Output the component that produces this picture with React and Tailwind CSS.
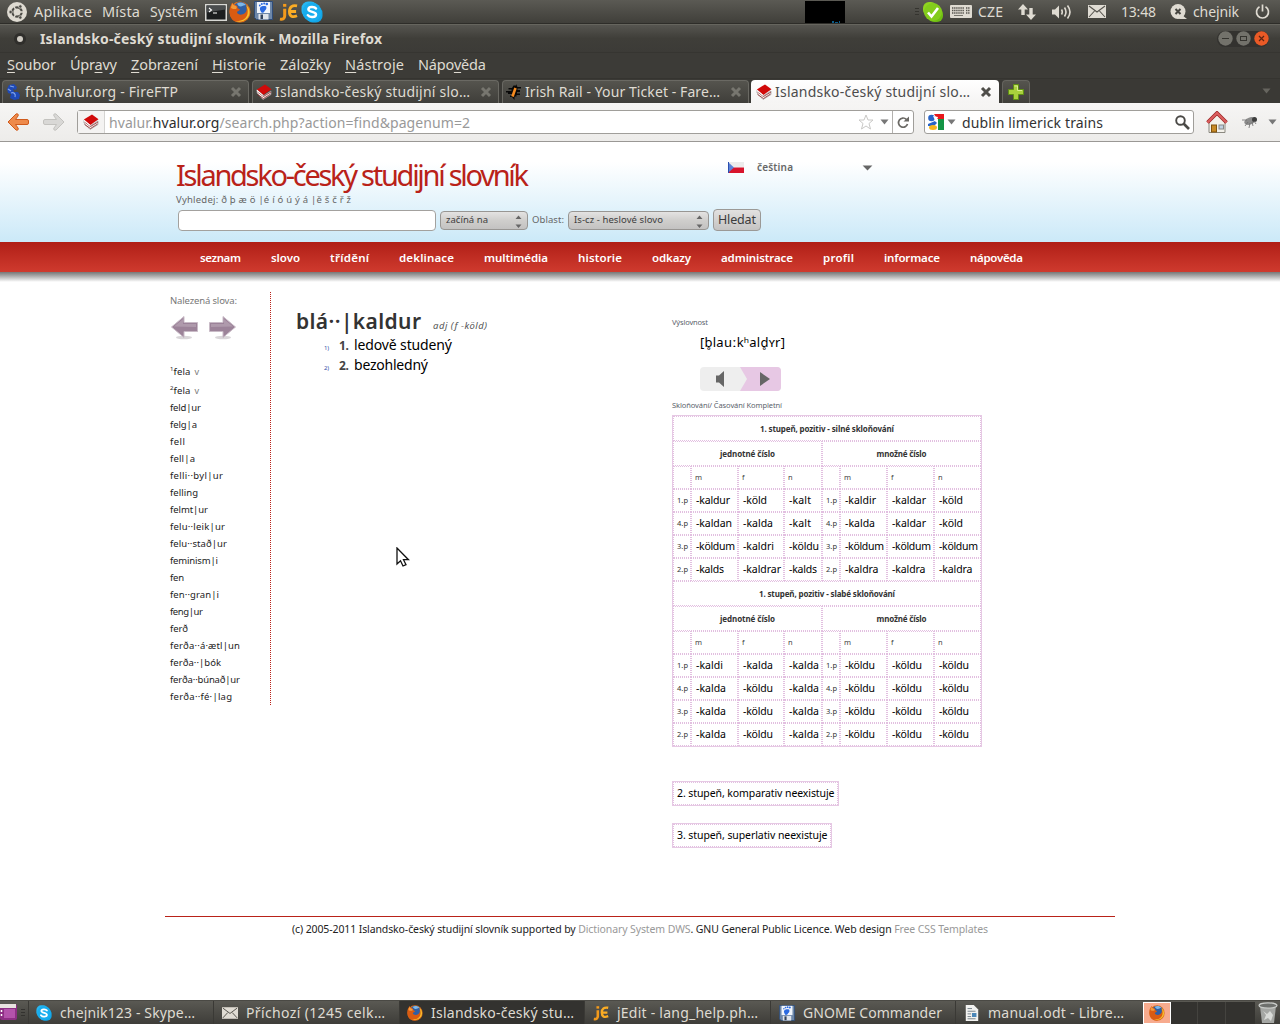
import React, { useLayoutEffect, useRef } from "react";

/* Text set to a fixed measure: tracking is computed from the natural width. */
function Fit({ w, className = "", children }) {
  const ref = useRef(null);
  useLayoutEffect(() => {
    const el = ref.current;
    el.style.letterSpacing = "0px";
    const natural = el.getBoundingClientRect().width;
    const count = el.textContent.replace(/[\u0300-\u036f]/g, "").length;
    if (count > 1) el.style.letterSpacing = (w - natural) / (count - 1) + "px";
  }, [w]);
  return (
    <span className={"block shrink-0 whitespace-pre " + className} style={{ width: w }}>
      <span ref={ref} className="inline-block [font-variant-ligatures:none]">{children}</span>
    </span>
  );
}

const Firefox = ({ className }) => (
  <svg viewBox="0 0 22 22" className={className}>
    <circle cx="11" cy="11" r="10.500" fill="#e2711a" />
    <circle cx="11.500" cy="8.500" r="7.500" fill="#2f5fa5" />
    <path d="M8 2.500c3-1.800 7-1 9 1.500-2 0-3 1-5 1.500-1.500.5-3-1-4-3z" fill="#7db7e8" />
    <path d="M1 6C2 4 3 3 3 1.500c1 1 1.500 2 3 2.500 2 .5 3 1 2.500 3L11 8.500c-.5 1.500-3 1.500-3 3 1 2.500 5 3 8 .5 2-2 2-4 1-7 4 3 5 8 2 12-3 4-9 5.500-14 3C.5 17 0 11 1 6z" fill="#d95b12" />
    <path d="M17 4c4 3 5 9 1.500 13-3 3.500-8 4.500-12 3 6 .5 11-2 12-7 .6-3.500 0-6-1.500-9z" fill="#f7c22d" />
    <path d="M2 7c0-2 1-3 1-5 1 2 2 2.500 4 3 1 1 1 2 0 3-2 0-4 0-5-1z" fill="#f29a3a" />
  </svg>
);

const Skype = ({ className }) => (
  <svg viewBox="0 0 22 22" className={className}>
    <rect x="0.500" y="0.500" width="16" height="16" rx="6.500" fill="#29b6f0" />
    <rect x="5" y="5.500" width="16.500" height="16" rx="6.500" fill="#12a5e6" />
    <circle cx="11" cy="11" r="9.500" fill="#18adee" />
    <path d="M15 7.500C13.500 5.300 7.400 5.200 7.400 8.300c0 3.200 7.600 2 7.600 5.200 0 3.200-6.500 3.400-8.200.7" fill="none" stroke="#fff" strokeWidth="2.500" strokeLinecap="round" />
  </svg>
);

const Commander = ({ className }) => (
  <svg viewBox="0 0 19 19" className={className}>
    <path d="M0.500 0.500h18v18h-16l-2-2z" fill="#6d87a8" stroke="#2f4c78" />
    <rect x="3" y="1" width="13" height="11" fill="#f1f5fb" />
    <rect x="4.500" y="13" width="10" height="5.500" fill="#dfe4ea" />
    <rect x="6.500" y="13.500" width="2.500" height="4.500" fill="#33435c" />
    <path d="M7.500 11.500c-1-1.500-2.300-3.500-1.300-5 1.300-1.300 4-1.800 6-1 .8 2-.4 3.500-1.400 4.200-.5 1.500-2 2.600-3.300 1.800z" fill="#2b6ae0" />
    <circle cx="5.800" cy="4.500" r="0.900" fill="#2b6ae0" /><circle cx="7.800" cy="3" r="1" fill="#2b6ae0" /><circle cx="10.200" cy="2.600" r="1" fill="#2b6ae0" /><circle cx="12.800" cy="3" r="1.300" fill="#2b6ae0" />
  </svg>
);

const JEdit = ({ className }) => (
  <svg viewBox="0 0 20 20" className={className}>
    <path d="M6 6.500v7.500c0 3-2 4-5 3.500" fill="none" stroke="#f39a1c" strokeWidth="3.200" />
    <rect x="4.300" y="1.500" width="3.400" height="3" fill="#f39a1c" />
    <path d="M19 3.500c-5-1-8 1-8 6s3 6.500 8 4.500M10 9.500h8" fill="none" stroke="#fbac24" strokeWidth="3" />
  </svg>
);

const Book = ({ className }) => (
  <svg viewBox="0 0 16 16" className={className}>
    <path d="M1 9l6 6.500 8-5V7L7 12 1 6z" fill="#f4f4f4" stroke="#999" strokeWidth="0.700" />
    <path d="M1.500 10.500l6 4 7-4.500M1.500 8l6 4.500L15 8" fill="none" stroke="#8a1414" strokeWidth="0.700" />
    <path d="M0.800 5.500L9 0.500l6.500 4.800L7.300 11z" fill="#d10a0a" />
    <path d="M0.800 5.500l6.500 5.500v1.200L0.800 7z" fill="#fff" />
  </svg>
);

const Envelope = ({ className }) => (
  <svg viewBox="0 0 18 13" className={className}>
    <rect width="18" height="13" fill="#e0dcd4" />
    <path d="M1 1l8 6 8-6M1 12l5.500-6M17 12l-5.500-6" fill="none" stroke="#55534d" strokeWidth="1.100" />
  </svg>
);

const Caret = ({ className = "", color = "#777", size = "h-[6px] w-[9px]" }) => (
  <svg viewBox="0 0 9 6" preserveAspectRatio="none" className={"shrink-0 " + size + " " + className}>
    <path d="M0.500 0.500h8L4.500 5.500z" fill={color} />
  </svg>
);

const TabClose = ({ color }) => (
  <svg viewBox="0 0 12 12" className="h-3 w-3 shrink-0">
    <path d="M2 2l8 8M10 2l-8 8" stroke={color} strokeWidth="3" />
  </svg>
);

function TopPanel() {
  return (
    <div className="flex h-6 items-center border-b border-[#2e2d29] bg-gradient-to-b from-[#5b5a54] to-[#403f3a] text-[14px] text-[#dfdbd2]">
      <svg viewBox="0 0 20 20" className="ml-[7px] h-5 w-5">
        <circle cx="10" cy="10" r="10" fill="#dfdbd2" />
        <circle cx="10" cy="10" r="4.700" fill="none" stroke="#4c4b46" strokeWidth="2.200" />
        <path d="M10 10L18 10M10 10L6 3M10 10L6 17" stroke="#dfdbd2" strokeWidth="1.400" />
        <circle cx="3.600" cy="10" r="1.700" fill="#4c4b46" stroke="#dfdbd2" strokeWidth="0.700" />
        <circle cx="13.300" cy="4.500" r="1.700" fill="#4c4b46" stroke="#dfdbd2" strokeWidth="0.700" />
        <circle cx="13.300" cy="15.500" r="1.700" fill="#4c4b46" stroke="#dfdbd2" strokeWidth="0.700" />
      </svg>
      <Fit w={58} className="ml-[7px] text-[14.500px]">Aplikace</Fit>
      <Fit w={38} className="ml-[10px] text-[14.500px]">Místa</Fit>
      <Fit w={48} className="ml-[10px]">Systém</Fit>
      <svg viewBox="0 0 22 17" className="ml-[7px] mt-[2px] h-[17px] w-[22px]">
        <rect width="22" height="17" fill="#d8d8d4" />
        <rect x="1.500" y="1.500" width="19" height="14" fill="#1b1e1f" />
        <path d="M1.500 8.500V1.500h19v4z" fill="#4a4d4e" />
        <path d="M4 4l2.500 2L4 8M8 9h4" fill="none" stroke="#fff" strokeWidth="1.100" />
      </svg>
      <Firefox className="ml-[2px] h-[22px] w-[22px]" />
      <Commander className="ml-[3px] -mt-[2px] h-[19px] w-[19px]" />
      <JEdit className="ml-[6px] h-[20px] w-[19px]" />
      <Skype className="ml-[3px] h-[22px] w-[22px]" />
      <div className="ml-[482px] flex h-[22px] w-[40px] items-end justify-end gap-px bg-black pr-[5px]">
        <span className="h-[2px] w-[2px] bg-[#0a5a86]" /><span className="h-px w-[3px] bg-[#0a5a86]" /><span className="h-[2px] w-px bg-[#0a5a86]" />
      </div>
      <div className="ml-[70px] flex flex-col gap-[2px]"><i className="h-px w-[4px] bg-[#35342f]" /><i className="h-px w-[4px] bg-[#35342f]" /><i className="h-px w-[4px] bg-[#35342f]" /></div>
      <svg viewBox="0 0 20 20" className="ml-[4px] h-5 w-5">
        <rect x="0" y="0" width="14" height="14" rx="6" fill="#8fd420" />
        <rect x="5" y="6" width="15" height="14" rx="6" fill="#6fbe12" />
        <circle cx="10" cy="10" r="9" fill="#83cc1c" />
        <path d="M5 10.500l3.500 4L15 6" fill="none" stroke="#fff" strokeWidth="2.600" />
      </svg>
      <svg viewBox="0 0 22 13" className="ml-[7px] h-[13px] w-[22px]">
        <rect width="22" height="13" rx="1" fill="#dfdbd2" />
        <path d="M2 3h12M2 5.500h12M2 8h12M16 3h4M16 5.500h4M16 8h4" stroke="#55534d" strokeWidth="1.300" strokeDasharray="1.400 0.700" />
        <path d="M4 10.500h9" stroke="#77756d" />
      </svg>
      <Fit w={25} className="ml-[6px]">CZE</Fit>
      <svg viewBox="0 0 18 16" className="ml-[15px] h-4 w-[18px]">
        <path d="M5 0l5 5.500H6.700V11H3.300V5.500H0zM13 16l-5-5.500h3.300V4h3.400v6.500H18z" fill="#dfdbd2" />
      </svg>
      <svg viewBox="0 0 20 16" className="ml-[16px] h-4 w-5">
        <path d="M0 5.500h3L7 1.500v13l-4-4H0z" fill="#dfdbd2" />
        <path d="M9.500 5.500q1.500 2.500 0 5M12.500 3.500q3 4.500 0 9M15.500 1.500q5 6.500 0 13" fill="none" stroke="#dfdbd2" strokeWidth="1.600" />
      </svg>
      <Envelope className="ml-[16px] h-[13px] w-[18px]" />
      <Fit w={35} className="ml-[15px]">13:48</Fit>
      <svg viewBox="0 0 17 16" className="ml-[14px] h-4 w-[17px]">
        <circle cx="8" cy="7.500" r="7.500" fill="#dfdbd2" />
        <path d="M12 11l5 4H9z" fill="#dfdbd2" />
        <path d="M5.500 5l5 5M10.500 5l-5 5" stroke="#45443f" strokeWidth="2" />
      </svg>
      <Fit w={46} className="ml-[6px]">chejnik</Fit>
      <svg viewBox="0 0 15 15" className="ml-[16px] h-[15px] w-[15px]">
        <path d="M4.500 2.800a6 6 0 1 0 6 0M7.500 0.500v7" fill="none" stroke="#dfdbd2" strokeWidth="1.700" />
      </svg>
    </div>
  );
}

function TitleBar() {
  return (
    <div className="flex h-7 items-center border-t border-[#66655e] bg-gradient-to-b from-[#565550] via-[#3f3e39] to-[#3c3b37] text-[#dfdbd2]">
      <div className="ml-[14px] flex h-3 w-3 items-center justify-center rounded-full bg-[#2f2e2b]">
        <span className="h-[6px] w-[6px] rounded-full bg-[#cfcbc3]" />
      </div>
      <Fit w={342} className="ml-[14px] text-[14px] font-bold">Islandsko-český studijní slovník - Mozilla Firefox</Fit>
      <div className="ml-[835px] flex h-4 items-center gap-[3px] rounded-full bg-[#33322f] pl-px">
        <svg viewBox="0 0 15 15" className="h-[15px] w-[15px]"><circle cx="7.500" cy="7.500" r="7.200" fill="#73726b" /><path d="M4 7.500h7" stroke="#35342f" /></svg>
        <svg viewBox="0 0 15 15" className="h-[15px] w-[15px]"><circle cx="7.500" cy="7.500" r="7.200" fill="#73726b" /><rect x="4.500" y="5.500" width="6" height="4" fill="none" stroke="#35342f" /></svg>
        <svg viewBox="0 0 15 15" className="h-[15px] w-[15px]"><circle cx="7.500" cy="7.500" r="7.200" fill="#ea5a26" /><path d="M5 5l5 5M10 5l-5 5" stroke="#5c2412" strokeWidth="1.200" /></svg>
      </div>
    </div>
  );
}

const MENU = [
  ["", "S", "oubor", 49], ["Úpr", "a", "vy", 47], ["", "Z", "obrazení", 67], ["", "H", "istorie", 54],
  ["Zál", "o", "žky", 51], ["", "N", "ástroje", 59], ["Nápo", "v", "ěda", 68],
];

function MenuBar() {
  return (
    <div className="flex h-[26px] items-center gap-[14px] border-t border-[#363531] bg-[#3c3b37] pb-px pl-[7px] text-[14.500px] text-[#dfdbd2]">
      {MENU.map(([a, key, b, w]) => (
        <Fit key={a + key + b} w={w}>{a}<span className="underline decoration-1 underline-offset-2">{key}</span>{b}</Fit>
      ))}
    </div>
  );
}

const RailIcon = ({ className }) => (
  <svg viewBox="0 0 16 16" className={className}>
    <path d="M7.500 1.500h2.500V0l1.500 3H15v1.500h-3.500V6H14v2h-3v1.500h3V11h-3.500v1.500H8.500V16L6 13H4v-1.500h2.500V10H2V8.500H0V7h5.500V5.500H2.500V4H6z" fill="#080808" />
    <path d="M9.500 4L6.500 12.500" stroke="#f58a1f" strokeWidth="2.600" />
  </svg>
);
const Horse = ({ className }) => (
  <svg viewBox="0 0 16 16" className={className}>
    <path d="M3 1l5-1 3 3-1 3-3-1 1 3 4 0 2 3-1 4-5 1-4-2 1-4-3-1-1-4z" fill="#1f49b4" />
    <path d="M4 2l4 1M5 9c3-1 5 1 4 4M2 5l3 2" fill="none" stroke="#7ea2ea" strokeWidth="1.200" />
  </svg>
);

const TABS = [
  [Horse, "ftp.hvalur.org - FireFTP", 153],
  [Book, "Islandsko-český studijní slo…", 195],
  [RailIcon, "Irish Rail - Your Ticket - Fare…", 195],
];

function TabBar() {
  return (
    <div className="flex h-[25px] items-end border-t border-[#353430] bg-[#3a3935] pl-[2px] text-[14px]">
      {TABS.map(([Icon, label, w], i) => (
        <div key={i} className="mr-[3px] flex h-[23px] w-[247px] items-center rounded-t-[4px] border border-b-0 border-[#6a6963] bg-gradient-to-b from-[#55544e] via-[#4a4944] to-[#3f3e3a] pb-px pl-[3px] pr-[6px] text-[#dfdbd2]">
          <Icon className="mr-[3px] h-4 w-4" />
          <Fit w={w} className="mr-auto leading-[19px]">{label}</Fit>
          <TabClose color="#77766f" />
        </div>
      ))}
      <div className="-ml-px flex h-[23px] w-[248px] items-center rounded-t-[4px] bg-gradient-to-b from-white to-[#f5f4f3] pl-[5px] pr-[7px] text-[#4c4c4c]">
        <Book className="mr-[3px] h-4 w-4" />
        <Fit w={195} className="mr-auto leading-[19px]">Islandsko-český studijní slo…</Fit>
        <TabClose color="#4f4e4a" />
      </div>
      <div className="ml-[3px] flex h-[23px] w-[28px] items-center justify-center rounded-t-[4px] border border-b-0 border-[#66655f] bg-gradient-to-b from-[#55544e] to-[#403f3a]">
        <svg viewBox="0 0 16 16" className="h-4 w-4"><path d="M5.500 .5h5v5h5v5h-5v5h-5v-5h-5v-5h5z" fill="#a9d13c" stroke="#5f8f14" /><path d="M6.500 2h3v4.500h4.500" fill="none" stroke="#d9ee8e" /></svg>
      </div>
      <Caret className="mb-[9px] ml-[232px]" color="#66655f" />
    </div>
  );
}

const FatArrow = ({ fill, stroke, flip }) => (
  <svg viewBox="0 0 22 18" className={"h-[18px] w-[22px] shrink-0 " + (flip ? "-scale-x-100" : "")}>
    <path d="M1 9l8-8c1.500-.8 3 .5 2 2L8.500 6.500H20a1.500 1.500 0 0 1 1.500 1.500v2a1.500 1.500 0 0 1-1.500 1.500H8.500L11 15c1 1.500-.5 2.800-2 2z" fill={fill} stroke={stroke} />
  </svg>
);

function Toolbar() {
  return (
    <div className="flex h-[39px] items-center border-b border-[#9a9895] bg-gradient-to-b from-[#f6f5f4] to-[#edecea]">
      <div className="ml-[7px]"><FatArrow fill="#ee8a4b" stroke="#cf5a1c" /></div>
      <div className="ml-[14px]"><FatArrow fill="#d9d8d6" stroke="#c3c2bf" flip /></div>
      <div className="ml-[12px] flex h-6 w-[837px] items-center rounded-[3px] border border-[#a09e9a] bg-white">
        <div className="flex h-full w-[27px] items-center justify-center border-r border-[#d5d4d2] bg-[#f4f3f2]"><Book className="h-4 w-4" /></div>
        <Fit w={361} className="ml-[4px] text-[14px] text-[#999]">hvalur.<span className="text-[#2d2d2d]">hvalur.org</span>/search.php?action=find&amp;pagenum=2</Fit>
        <svg viewBox="0 0 16 16" className="ml-auto h-4 w-4"><path d="M8 1l2 5h5l-4 3.500 1.500 5.500L8 12l-4.500 3L5 9.500 1 6h5z" fill="#fff" stroke="#c9c8c6" /></svg>
        <Caret className="ml-[6px] mr-[3px]" />
        <div className="flex h-full w-[21px] items-center justify-center border-l border-[#b3b1ae]">
          <svg viewBox="0 0 13 13" className="h-[13px] w-[13px]"><path d="M10.500 8A4.600 4.600 0 1 1 9.300 3.300" fill="none" stroke="#6a6864" strokeWidth="1.700" /><path d="M6.500 5.500h5.500V0.500z" fill="#6a6864" /></svg>
        </div>
      </div>
      <div className="ml-[10px] flex h-6 w-[270px] items-center rounded-[3px] border border-[#a09e9a] bg-white pl-[3px] pr-[3px]">
        <svg viewBox="0 0 16 16" className="h-4 w-4">
          <rect width="16" height="16" fill="#fff" /><path d="M6 0h10v5L9 5z" fill="#e8171b" /><path d="M10 5h6v11h-6z" fill="#149445" />
          <circle cx="3.500" cy="4" r="3.300" fill="#2764c8" /><path d="M0 10l7-3 2 2-3 3H0z" fill="#2764c8" /><ellipse cx="5" cy="13.500" rx="4" ry="2.500" fill="#f5b51c" /><path d="M5 2l3 6 2-5z" fill="#fff" />
        </svg>
        <Caret className="ml-[3px]" />
        <Fit w={141} className="ml-[6px] text-[14px] text-[#333]">dublin limerick trains</Fit>
        <svg viewBox="0 0 15 15" className="ml-auto h-[15px] w-[15px]"><circle cx="5.500" cy="5.500" r="4.300" fill="none" stroke="#4a4946" strokeWidth="1.900" /><path d="M8.500 8.500L14 14" stroke="#4a4946" strokeWidth="2.600" /></svg>
      </div>
      <svg viewBox="0 0 22 22" className="ml-[12px] h-[22px] w-[22px]">
        <path d="M3 11L11 3l8 8v10.500H3z" fill="#f3f1ea" stroke="#8a8880" />
        <path d="M1.500 11.500L11 2l9.500 9.500" fill="none" stroke="#9c2626" strokeWidth="3.600" />
        <path d="M1.500 11.500L11 2l9.500 9.500" fill="none" stroke="#dc5f5f" strokeWidth="2.200" />
        <rect x="5.500" y="14" width="5" height="7" fill="#c88a25" stroke="#80530f" /><rect x="13" y="14" width="4.500" height="4" fill="#bfd0e0" stroke="#888" />
      </svg>
      <svg viewBox="0 0 16 14" className="ml-[14px] h-[14px] w-4">
        <ellipse cx="8" cy="6" rx="6" ry="3.500" fill="#8b8b8b" transform="rotate(-20 8 6)" /><circle cx="12.500" cy="4.500" r="2.500" fill="#3d3d3d" />
        <path d="M0 5h5M3 11l3-4M7 13l1-5M11 11l-1-4M14 9l-2-3" stroke="#6c6c6c" strokeWidth="0.800" />
      </svg>
      <Caret className="ml-[10px]" />
    </div>
  );
}

const SelectBox = ({ className, label, w }) => (
  <div className={"flex h-[19px] items-center rounded-[4px] border border-[#989693] bg-gradient-to-b from-[#e4e3e2] via-[#cfcecc] to-[#c3c2c1] pl-[5px] pr-[5px] text-[9.500px] text-[#3c3c3c] " + className}>
    <Fit w={w} className="mr-auto mt-px">{label}</Fit>
    <svg viewBox="0 0 7 13" className="mt-[2px] h-[13px] w-[7px]"><path d="M0.500 4h6L3.500 0.500zM0.500 9.500h6l-3 3.500z" fill="#666" /></svg>
  </div>
);

function PageHeader() {
  return (
    <header className="flex h-[100px] bg-gradient-to-b from-white from-20% to-[#cbe9f8]">
      <div className="flex w-[728px] shrink-0 flex-col pl-[176px]">
        <h1 className="mt-[17px] h-[35px] text-[29px] leading-[32px] text-[#b92219]"><Fit w={353}>Islandsko-český studijní slovník</Fit></h1>
        <div className="h-[14px] text-[9.500px] leading-[12px] text-[#666]"><Fit w={175}>Vyhledej: ð þ æ ö |é í ó ú ý á |ě š č ř ž</Fit></div>
        <div className="flex h-6 w-[600px] items-center pl-[2px]">
          <div className="h-[21px] w-[258px] shrink-0 rounded-[4px] border border-[#a3a19e] bg-white" />
          <SelectBox className="ml-[4px] w-[88px] shrink-0" label="začíná na" w={42} />
          <Fit w={32} className="ml-[4px] mt-px text-[9.500px] text-[#666]">Oblast:</Fit>
          <SelectBox className="ml-[4px] w-[141px] shrink-0" label="Is-cz - heslové slovo" w={89} />
          <div className="ml-[4px] flex h-[22px] w-[48px] shrink-0 items-center justify-center rounded-[4px] border border-[#9b9996] bg-gradient-to-b from-[#e2e1e0] to-[#c4c3c2] text-[12.500px] text-[#3c3c3c]"><Fit w={38} className="mt-px">Hledat</Fit></div>
        </div>
      </div>
      <div className="mt-[17px] flex h-4 items-center">
        <svg viewBox="0 0 16 11" className="mt-px h-[11px] w-4"><rect width="16" height="5.500" fill="#ececec" /><rect y="5.500" width="16" height="5.500" fill="#d8142c" /><path d="M0 0l6 5.500L0 11z" fill="#5c83d8" /><path d="M0.500 0v11" stroke="#2b4fb0" /></svg>
        <Fit w={36} className="ml-[13px] text-[10px] font-semibold text-[#666]">čeština</Fit>
        <Caret className="ml-[69px] mt-px" size="h-[6px] w-[11px]" color="#666" />
      </div>
    </header>
  );
}

const NAV = [["seznam", 41], ["slovo", 29], ["třídění", 39], ["deklinace", 55], ["multimédia", 64], ["historie", 44], ["odkazy", 39], ["administrace", 72], ["profil", 31], ["informace", 56], ["nápověda", 53]];

const WORDS = [["feld|ur", 31], ["felg|a", 27], ["fell", 15], ["fell|a", 25], ["felli··byl|ur", 53], ["felling", 28], ["felmt|ur", 38], ["felu··leik|ur", 55], ["felu··stað|ur", 57], ["feminism|i", 48], ["fen", 14], ["fen··gran|i", 49], ["feng|ur", 33], ["ferð", 18], ["ferða··á·ætl|un", 70], ["ferða··|bók", 51], ["ferða··búnað|ur", 70], ["ferða··fé·|lag", 62]];

const PurpleArrow = ({ flip }) => (
  <svg viewBox="0 0 27 24" className={"h-6 w-[27px] " + (flip ? "-scale-x-100" : "")}>
    <ellipse cx="13" cy="21.500" rx="8" ry="1.800" fill="#d9d6d9" />
    <path d="M0.500 11L13 0.500v6h13.500v9H13v6z" fill="#9c8399" stroke="#c9bbc7" />
    <path d="M3 10.500L12 3v5h13v3z" fill="#af9aac" />
  </svg>
);

function Sidebar() {
  return (
    <aside className="h-[413px] w-[101px] shrink-0 border-r border-dotted border-[#b92219] text-[9.500px] leading-[17px] text-[#222]">
      <Fit w={67} className="text-[#777]">Nalezená slova:</Fit>
      <div className="mt-[7px] flex gap-[11px] pl-px"><PurpleArrow /><PurpleArrow flip /></div>
      <div className="mt-[23px] flex h-[19px]"><span className="text-[6px] leading-[12px]">1</span><Fit w={17}>fela</Fit><span className="ml-[4px] text-[9px] text-[#777]">v</span></div>
      <div className="flex h-[17px]"><span className="text-[6px] leading-[12px]">2</span><Fit w={17}>fela</Fit><span className="ml-[4px] text-[9px] text-[#777]">v</span></div>
      {WORDS.map(([t, w]) => <Fit key={t} w={w}>{t}</Fit>)}
    </aside>
  );
}

const WIDTHS = { "-kaldur": 34, "-köld": 24, "-kalt": 22, "-kaldir": 31, "-kaldar": 34, "-kaldan": 36, "-kalda": 30, "-köldum": 39, "-kaldri": 31, "-köldu": 30, "-kalds": 28, "-kaldrar": 38, "-kaldra": 33.5, "-kaldi": 27 };

const SECTIONS = [
  { title: "1. stupeň, pozitiv - silné skloňování", w: 134, rows: [
    ["1.p", "-kaldur", "-köld", "-kalt", "1.p", "-kaldir", "-kaldar", "-köld"],
    ["4.p", "-kaldan", "-kalda", "-kalt", "4.p", "-kalda", "-kaldar", "-köld"],
    ["3.p", "-köldum", "-kaldri", "-köldu", "3.p", "-köldum", "-köldum", "-köldum"],
    ["2.p", "-kalds", "-kaldrar", "-kalds", "2.p", "-kaldra", "-kaldra", "-kaldra"],
  ] },
  { title: "1. stupeň, pozitiv - slabé skloňování", w: 136, rows: [
    ["1.p", "-kaldi", "-kalda", "-kalda", "1.p", "-köldu", "-köldu", "-köldu"],
    ["4.p", "-kalda", "-köldu", "-kalda", "4.p", "-köldu", "-köldu", "-köldu"],
    ["3.p", "-kalda", "-köldu", "-kalda", "3.p", "-köldu", "-köldu", "-köldu"],
    ["2.p", "-kalda", "-köldu", "-kalda", "2.p", "-köldu", "-köldu", "-köldu"],
  ] },
];

const CELL = "flex items-center overflow-visible border border-dotted border-[#e2bfe0] pl-[4px]";
const HEAD = "flex items-center justify-center border border-dotted border-[#e2bfe0] text-[8px] font-bold text-[#333]";

function Declension() {
  return (
    <div className="w-[310px] border border-[#e6c9e4]">
      {SECTIONS.map((s) => (
        <div key={s.title} className="grid grid-cols-[18px_47px_46px_38px_18px_47px_47px_47px]">
          <div className={"col-span-8 h-[25px] pt-px " + HEAD}><Fit w={s.w}>{s.title}</Fit></div>
          <div className={"col-span-4 h-[25px] pt-px " + HEAD}><Fit w={55}>jednotné číslo</Fit></div>
          <div className={"col-span-4 h-[25px] pt-px " + HEAD}><Fit w={50}>množné číslo</Fit></div>
          {["", "m", "f", "n", "", "m", "f", "n"].map((g, i) => (
            <div key={i} className={"h-[23px] text-[7.500px] text-[#444] " + CELL}><span className="-ml-px">{g}</span></div>
          ))}
          {s.rows.flatMap((r, ri) => r.map((c, ci) => (
            <div key={ri + "-" + ci} className={"h-[23px] " + CELL}>
              {ci % 4 === 0
                ? <Fit w={11} className="-ml-px text-[7.500px] text-[#333]">{c}</Fit>
                : <Fit w={WIDTHS[c]} className="text-[10.500px] text-black">{c}</Fit>}
            </div>
          )))}
        </div>
      ))}
    </div>
  );
}

const NoteBox = ({ className, w, children }) => (
  <div className={"h-[25px] border border-[#e6c9e4] " + className}>
    <div className="flex h-full items-center border border-dotted border-[#e2bfe0] pl-[3px] text-[10.500px] text-black"><Fit w={w}>{children}</Fit></div>
  </div>
);

function Entry() {
  return (
    <section className="w-[401px] shrink-0 pl-[25px] pt-[14px]">
      <div className="flex h-[29px] items-baseline">
        <Fit w={125} className="text-[21px] font-semibold leading-[30px] text-[#333]">blá··|kaldur</Fit>
        <Fit w={54} className="ml-[12px] text-[9.500px] italic text-[#555]">adj (f -köld)</Fit>
      </div>
      {[["1", "ledově studený", 98], ["2", "bezohledný", 74]].map(([n, t, w]) => (
        <div key={n} className="flex h-5 items-baseline pl-[28px] leading-5">
          <Fit w={5} className="text-[6px] text-[#3355aa]">{n + ")"}</Fit>
          <Fit w={10} className="ml-[10px] text-[12px] font-bold text-[#444]">{n + "."}</Fit>
          <Fit w={w} className="ml-[5px] text-[14px] text-black">{t}</Fit>
        </div>
      ))}
    </section>
  );
}

function Details() {
  return (
    <section className="w-[320px] text-[7.500px] text-[#5b5f6c]">
      <Fit w={36} className="mt-[25px] leading-[10px]">Výslovnost</Fit>
      <Fit w={85} className="ml-[28px] mt-[6px] text-[13px] leading-[19px] text-black">{"[b\u0325lauːkʰald\u0325ʏr]"}</Fit>
      <svg viewBox="0 0 81 24" className="ml-[28px] mt-[15px] h-6 w-[81px]">
        <rect width="81" height="24" rx="4" fill="#eeeeee" />
        <path d="M40 0h37a4 4 0 0 1 4 4v16a4 4 0 0 1-4 4H40l7-12z" fill="#e7c8e4" />
        <path d="M16 8.500h3l5-4.500v16l-5-4.500h-3zM60 5l10 7-10 7z" fill="#666" />
      </svg>
      <Fit w={110} className="mb-[5px] mt-[9px] leading-[10px]">Skloňování/ Časování Kompletní</Fit>
      <Declension />
      <NoteBox w={157.5} className="mt-[34px] w-[167px]">2. stupeň, komparativ neexistuje</NoteBox>
      <NoteBox w={150.5} className="mt-[17px] w-[160px]">3. stupeň, superlativ neexistuje</NoteBox>
    </section>
  );
}

const DocIcon = ({ className }) => (
  <svg viewBox="0 0 16 18" className={className}><path d="M1 0h9l5 5v13H1z" fill="#f2f2f0" /><path d="M3 4h5M3 7h9M3 10h4M3 13h4M3 15.500h9" stroke="#6a7680" /><rect x="8" y="9" width="5" height="4.500" fill="#4b87b8" /></svg>
);

const TASKS = [
  [Skype, "chejnik123 - Skype…", 135, "w-[185px] pl-[7px]"],
  [Envelope, "Příchozí (1245 celk…", 139, "w-[186px] pl-[8px]"],
  [Firefox, "Islandsko-český stu…", 143, "w-[185px] pl-[7px] bg-[#33322f]"],
  [JEdit, "jEdit - lang_help.ph…", 141, "w-[186px] pl-[8px]"],
  [Commander, "GNOME Commander", 139, "w-[185px] pl-[8px]"],
  [DocIcon, "manual.odt - Libre…", 136, "w-[186px] pl-[8px]"],
];

function BottomPanel() {
  return (
    <div className="flex h-6 items-center border-t border-[#4a4944] bg-gradient-to-b from-[#5a5953] to-[#3e3d39] text-[14px] text-[#dfdbd2]">
      <svg viewBox="0 0 17 17" className="h-[17px] w-[17px] shrink-0"><rect width="17" height="16" rx="2" fill="#8d2f84" /><rect x="0" y="0" width="16" height="4" fill="#e8e2e0" /><rect x="4" y="5" width="11" height="9" fill="#b353ab" /><path d="M1.500 6v2M1.500 10v2" stroke="#fff" strokeWidth="1.500" /></svg>
      <div className="ml-[4px] mr-[3px] flex w-[4px] shrink-0 flex-col gap-[2px]"><i className="h-px w-[4px] bg-[#33322f]" /><i className="h-px w-[4px] bg-[#33322f]" /><i className="h-px w-[4px] bg-[#33322f]" /></div>
      {TASKS.map(([Icon, label, w, cls]) => (
        <div key={label} className={"flex h-full shrink-0 items-center border-l border-[#3a3935] " + cls}>
          <Icon className="h-4 w-4 shrink-0" /><Fit w={w} className="ml-[8px]">{label}</Fit>
        </div>
      ))}
      <div className="ml-[2px] flex h-[22px] w-[112px] shrink-0 bg-[#33322f]">
        <div className="flex h-full w-[28px] items-center justify-center border border-white bg-[#f7ab8e]"><Firefox className="h-4 w-4" /></div>
        <div className="w-[27px] border-r border-[#44433f]" /><div className="w-[28px] border-r border-[#44433f]" />
      </div>
      <svg viewBox="0 0 20 22" className="ml-[3px] h-[22px] w-5 shrink-0"><path d="M2 4h16l-2 17H4z" fill="#a5a7a4" /><path d="M5 9l3 4-2 5 4-2 3 3 2-6-3-4-3 3z" fill="#d9dbd8" /><ellipse cx="10" cy="3.500" rx="9" ry="2.700" fill="#6e706d" stroke="#c9cbc8" strokeWidth="1.200" /></svg>
    </div>
  );
}

export default function App() {
  return (
    <div className="relative flex h-[1024px] w-[1280px] flex-col overflow-hidden bg-white font-['Noto_Sans','Open_Sans',sans-serif]">
      <TopPanel />
      <TitleBar />
      <MenuBar />
      <TabBar />
      <Toolbar />
      <PageHeader />
      <nav className="flex h-[30px] items-center gap-[30px] bg-gradient-to-b from-[#b01e16] to-[#cf3a2e] pl-[200px] pt-[2px] text-[11.500px] font-semibold text-white">
        {NAV.map(([t, w]) => <Fit key={t} w={w}>{t}</Fit>)}
      </nav>
      <div className="h-[10px] bg-gradient-to-b from-[#777] to-white" />
      <main className="flex h-[634px] pl-[170px] pt-[10px]">
        <Sidebar />
        <Entry />
        <Details />
      </main>
      <footer className="mx-[165px] flex h-[84px] justify-center border-t border-[#b92219] pt-[4px] text-[10.500px] leading-[17px] text-[#222]">
        <Fit w={696}>(c) 2005-2011 Islandsko-český studijní slovník supported by <span className="text-[#999]">Dictionary System DWS</span>. GNU General Public Licence. Web design <span className="text-[#999]">Free CSS Templates</span></Fit>
      </footer>
      <BottomPanel />
      <svg viewBox="0 0 14 21" className="absolute left-[396px] top-[547px] h-[21px] w-[14px]">
        <path d="M1 1v16l3.500-3.200L7 19l3-1.300-2.500-5H12.500z" fill="#fff" stroke="#111" strokeWidth="1.300" />
      </svg>
    </div>
  );
}
